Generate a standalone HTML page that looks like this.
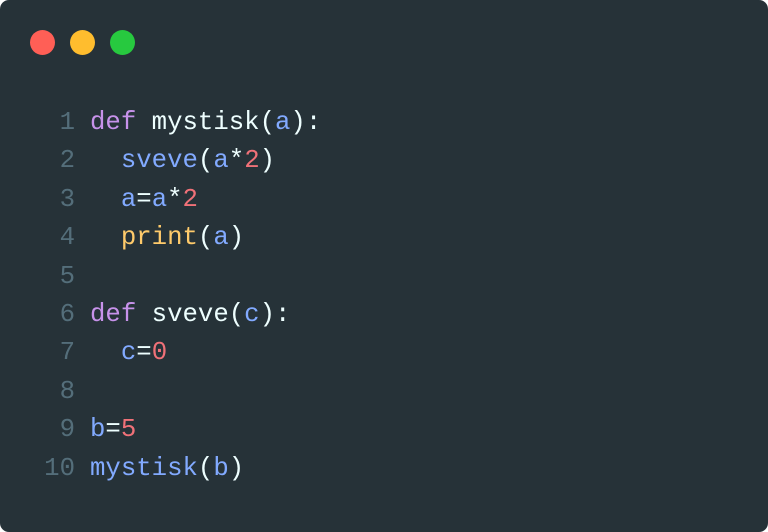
<!DOCTYPE html>
<html><head><style>
html,body{margin:0;padding:0;background:#fff;}
.win{position:absolute;left:0;top:0;width:768px;height:532px;background:#263238;border-radius:9px;overflow:hidden;}
.dot{position:absolute;top:30px;width:25px;height:25px;border-radius:50%;}
pre{position:absolute;left:0;top:104px;margin:0;font-family:"Liberation Mono",monospace;font-size:25.7px;line-height:38.4px;color:#eeffff;}
.n{display:inline-block;width:75px;text-align:right;color:#546e7a;margin-right:15px;}
.k{color:#c792ea}.b{color:#82aaff}.r{color:#f07178}.y{color:#ffcb6b}
</style></head><body>
<div class="win">
<div class="dot" style="left:30px;background:#ff5f56"></div>
<div class="dot" style="left:70px;background:#ffbd2e"></div>
<div class="dot" style="left:110px;background:#27c93f"></div>
<pre><span class="n">1</span><span class="k">def</span> mystisk(<span class="b">a</span>):
<span class="n">2</span>  <span class="b">sveve</span>(<span class="b">a</span>*<span class="r">2</span>)
<span class="n">3</span>  <span class="b">a</span>=<span class="b">a</span>*<span class="r">2</span>
<span class="n">4</span>  <span class="y">print</span>(<span class="b">a</span>)
<span class="n">5</span>
<span class="n">6</span><span class="k">def</span> sveve(<span class="b">c</span>):
<span class="n">7</span>  <span class="b">c</span>=<span class="r">0</span>
<span class="n">8</span>
<span class="n">9</span><span class="b">b</span>=<span class="r">5</span>
<span class="n">10</span><span class="b">mystisk</span>(<span class="b">b</span>)</pre>
</div>
</body></html>
